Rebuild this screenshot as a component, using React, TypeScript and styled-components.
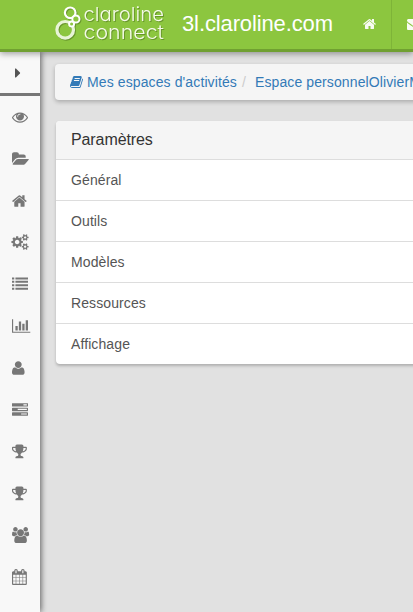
import React from "react";
import styled, { createGlobalStyle } from "styled-components";

const GlobalStyle = createGlobalStyle`
  * { box-sizing: border-box; }
  body {
    margin: 0;
    background: #e1e1e1;
    color: #555;
    font: 14px/20px "Liberation Sans", Arial, sans-serif;
    overflow: hidden;
  }
`;

const Page = styled.div`
  height: 612px;
  width: 100%;
  display: flex;
  flex-direction: column;
  overflow: hidden;
`;

const Header = styled.header`
  position: relative;
  z-index: 2;
  flex: none;
  height: 52px;
  display: flex;
  align-items: stretch;
  background: #8cc63f;
  border-bottom: 3px solid #70a031;
  box-shadow: 0 2px 6px rgba(0, 0, 0, 0.35);
  color: #fff;
`;

const Logo = styled.svg`
  flex: none;
  width: 112px;
  height: 49px;
  margin-left: 54px;
  filter: drop-shadow(1px 1px 0.5px rgba(60, 90, 20, 0.45));
`;

const LogoText = styled.text`
  font: 300 19px Inter, sans-serif;
  font-feature-settings: "cv11";
  fill: #f4fae8;
`;

const SiteName = styled.span`
  flex: none;
  width: 182px;
  padding-left: 16px;
  font-size: 22px;
  letter-spacing: -0.12px;
  line-height: 48px;
  white-space: nowrap;
`;

const NavItem = styled.a`
  flex: none;
  width: 44px;
  padding: 17px 0 0 15px;
  border-right: 1px solid #7eb338;
  opacity: 0.94;
`;

const Body = styled.div`
  flex: 1;
  display: flex;
  min-height: 0;
`;

const Sidebar = styled.nav`
  position: relative;
  z-index: 1;
  flex: none;
  width: 40px;
  display: flex;
  flex-direction: column;
  background: #f8f8f8;
  box-shadow: 1px 0 6px rgba(0, 0, 0, 0.6);
  color: #777;
`;

const Toggle = styled.div`
  flex: none;
  height: 44px;
  padding: 13px 0 0 15px;
  border-bottom: 3px solid #777;
  color: #555;
`;

const SideItem = styled.a`
  flex: none;
  height: 41.8px;
  padding: 13px 0 0 12px;
`;

const Glyph = styled.svg`
  display: block;
  flex: none;
  fill: currentColor;
  overflow: visible;
`;

const Content = styled.main`
  flex: none;
  width: 700px;
  padding: 12px 15px 0;
`;

const Breadcrumb = styled.div`
  height: 36px;
  display: flex;
  align-items: center;
  padding: 0 15px;
  border-radius: 4px;
  background: #f5f5f5;
  box-shadow: 0 2px 4px rgba(0, 0, 0, 0.24);
  letter-spacing: 0.11px;
  white-space: nowrap;
`;

const Crumb = styled.a`
  display: flex;
  align-items: center;
  gap: 4px;
  color: #337ab7;
`;

const Separator = styled.span`
  padding: 0 9px 0 5px;
  color: #ccc;
`;

const Panel = styled.section`
  margin: 21px 0 0 1px;
  border-radius: 4px;
  background: #fff;
  overflow: hidden;
  box-shadow: 0 2px 3px rgba(0, 0, 0, 0.22);
`;

const PanelTitle = styled.h3`
  height: 38px;
  margin: 0;
  padding: 0 15px;
  background: #f5f5f5;
  color: #333;
  font-size: 16px;
  font-weight: 400;
  letter-spacing: -0.1px;
  line-height: 37px;
`;

const PanelRow = styled.div`
  height: 41px;
  padding: 10px 15px;
  border-top: 1px solid #ddd;
  color: #555;
  letter-spacing: 0.1px;
`;

interface IconShape {
  w: number;
  d: string;
}

const icons: Record<string, IconShape> = {
  caret: { w: 640, d: "M576 896q0 26-19 45l-448 448q-19 19-45 19t-45-19-19-45v-896q0-26 19-45t45-19 45 19l448 448q19 19 19 45z" },
  eye: { w: 1792, d: "M1664 960q-152-236-381-353 61 104 61 225 0 185-131.5 316.5t-316.5 131.5-316.5-131.5-131.5-316.5q0-121 61-225-229 117-381 353 133 205 333.5 326.5t434.5 121.5 434.5-121.5 333.5-326.5zm-720-384q0-20-14-34t-34-14q-125 0-214.5 89.5t-89.5 214.5q0 20 14 34t34 14 34-14 14-34q0-86 61-147t147-61q20 0 34-14t14-34zm848 384q0 34-20 69-140 230-376.5 368.5t-499.5 138.5-499.5-139-376.5-368q-20-35-20-69t20-69q140-229 376.5-368t499.5-139 499.5 139 376.5 368q20 35 20 69z" },
  folder: { w: 1920, d: "M1879 952q0 31-31 66l-336 396q-43 51-120.5 86.5t-143.5 35.5h-1088q-34 0-60.5-13t-26.5-43q0-31 31-66l336-396q43-51 120.5-86.5t143.5-35.5h1088q34 0 60.5 13t26.5 43zm-343-344v160h-832q-94 0-197 47.5t-164 119.5l-337 396-5 6q0-4-.5-12.5t-.5-12.5v-960q0-92 66-158t158-66h320q92 0 158 66t66 158v32h544q92 0 158 66t66 158z" },
  home: { w: 1664, d: "M1408 992v480q0 26-19 45t-45 19h-384v-384h-256v384h-384q-26 0-45-19t-19-45v-480q0-1 .5-3t.5-3l575-474 575 474q1 2 1 6zm223-69l-62 74q-8 9-21 11h-3q-13 0-21-7l-692-577-692 577q-12 8-24 7-13-2-21-11l-62-74q-8-10-7-23.5t11-21.5l719-599q32-26 76-26t76 26l244 204v-195q0-14 9-23t23-9h192q14 0 23 9t9 23v408l219 182q10 8 11 21.5t-7 23.5z" },
  cogs: { w: 1920, d: "M832 896q0-106-75-181t-181-75-181 75-75 181 75 181 181 75 181-75 75-181zm768 512q0-52-38-90t-90-38-90 38-38 90q0 53 37.5 90.5t90.5 37.5 90.5-37.5 37.5-90.5zm0-1024q0-52-38-90t-90-38-90 38-38 90q0 53 37.5 90.5t90.5 37.5 90.5-37.5 37.5-90.5zm-384 421v185q0 10-7 19.5t-16 10.5l-155 24q-11 35-32 76 34 48 90 115 7 11 7 20 0 12-7 19-23 30-82.5 89.5t-78.5 59.5q-11 0-21-7l-115-90q-37 19-77 31-11 108-23 155-7 24-30 24h-186q-11 0-20-7.5t-10-17.5l-23-153q-34-10-75-31l-118 89q-7 7-20 7-11 0-21-8-144-133-144-160 0-9 7-19 10-14 41-53t47-61q-23-44-35-82l-152-24q-10-1-17-9.5t-7-19.5v-185q0-10 7-19.5t16-10.5l155-24q11-35 32-76-34-48-90-115-7-11-7-20 0-12 7-20 22-30 82-89t79-59q11 0 21 7l115 90q34-18 77-32 11-108 23-154 7-24 30-24h186q11 0 20 7.5t10 17.5l23 153q34 10 75 31l118-89q8-7 20-7 11 0 21 8 144 133 144 160 0 8-7 19-12 16-42 54t-45 60q23 48 34 82l152 23q10 2 17 10.5t7 19.5zm640 533v140q0 16-149 31-12 27-30 52 51 113 51 138 0 4-4 7-122 71-124 71-8 0-46-47t-52-68q-20 2-30 2t-30-2q-14 21-52 68t-46 47q-2 0-124-71-4-3-4-7 0-25 51-138-18-25-30-52-149-15-149-31v-140q0-16 149-31 13-29 30-52-51-113-51-138 0-4 4-7 4-2 35-20t59-34 30-16q8 0 46 46.5t52 67.5q20-2 30-2t30 2q51-71 92-112l6-2q4 0 124 70 4 3 4 7 0 25-51 138 17 23 30 52 149 15 149 31zm0-1024v140q0 16-149 31-12 27-30 52 51 113 51 138 0 4-4 7-122 71-124 71-8 0-46-47t-52-68q-20 2-30 2t-30-2q-14 21-52 68t-46 47q-2 0-124-71-4-3-4-7 0-25 51-138-18-25-30-52-149-15-149-31v-140q0-16 149-31 13-29 30-52-51-113-51-138 0-4 4-7 4-2 35-20t59-34 30-16q8 0 46 46.5t52 67.5q20-2 30-2t30 2q51-71 92-112l6-2q4 0 124 70 4 3 4 7 0 25-51 138 17 23 30 52 149 15 149 31z" },
  list: { w: 1792, d: "M0 1312h256v224h-256zM0 928h256v224h-256zM0 544h256v224h-256zM0 160h256v224h-256zM384 1312h1408v224h-1408zM384 928h1408v224h-1408zM384 544h1408v224h-1408zM384 160h1408v224h-1408z" },
  chart: { w: 2048, d: "M640 896v512h-256v-512h256zm384-512v1024h-256v-1024h256zm1024 1152v128h-2048v-1536h128v1408h1920zm-640-896v768h-256v-768h256zm384-384v1152h-256v-1152h256z" },
  user: { w: 1408, d: "M1408 1405q0 120-73 189.5t-194 69.5h-874q-121 0-194-69.5t-73-189.5q0-53 3.5-103.5t14-109 26.5-108.5 43-97.5 62-81 85.5-53.5 111.5-20q9 0 42 21.5t74.5 48 108 48 133.5 21.5 133.5-21.5 108-48 74.5-48 42-21.5q61 0 111.5 20t85.5 53.5 62 81 43 97.5 26.5 108.5 14 109 3.5 103.5zm-320-893q0 159-112.5 271.5t-271.5 112.5-271.5-112.5-112.5-271.5 112.5-271.5 271.5-112.5 271.5 112.5 112.5 271.5z" },
  tasks: { w: 1792, d: "M1024 1408h640v-128h-640v128zm-384-512h1024v-128h-1024v128zm640-512h384v-128h-384v128zm512 832v256q0 26-19 45t-45 19h-1664q-26 0-45-19t-19-45v-256q0-26 19-45t45-19h1664q26 0 45 19t19 45zm0-512v256q0 26-19 45t-45 19h-1664q-26 0-45-19t-19-45v-256q0-26 19-45t45-19h1664q26 0 45 19t19 45zm0-512v256q0 26-19 45t-45 19h-1664q-26 0-45-19t-19-45v-256q0-26 19-45t45-19h1664q26 0 45 19t19 45z" },
  trophy: { w: 1664, d: "M458 930q-74-162-74-370h-256v96q0 78 94.5 162t235.5 112zm1078-274v-96h-256q0 208-74 370 141-28 235.5-112t94.5-162zm128-128v128q0 71-41.5 143t-112 130-173 97.5-215.5 44.5q-42 54-95 95-38 34-52.5 72.5t-14.5 89.5q0 54 30.5 91t97.5 37q75 0 133.5 45.5t58.5 114.5v64q0 14-9 23t-23 9h-832q-14 0-23-9t-9-23v-64q0-69 58.5-114.5t133.5-45.5q67 0 97.5-37t30.5-91q0-51-14.5-89.5t-52.5-72.5q-53-41-95-95-113-5-215.5-44.5t-173-97.5-112-130-41.5-143v-128q0-40 28-68t68-28h288v-96q0-66 47-113t113-47h576q66 0 113 47t47 113v96h288q40 0 68 28t28 68z" },
  users: { w: 1920, d: "M593 896q-162 5-265 128h-134q-82 0-138-40.5t-56-118.5q0-353 124-353 6 0 43.5 21t97.5 42.5 119 21.5q67 0 133-23-5 37-5 66 0 159 81 256zm1071 637q0 120-73 189.5t-194 69.5h-874q-121 0-194-69.5t-73-189.5q0-53 3.5-103.5t14-109 26.5-108.5 43-97.5 62-81 85.5-53.5 111.5-20q10 0 43 21.5t73 48 107 48 135 21.5 135-21.5 107-48 73-48 43-21.5q61 0 111.5 20t85.5 53.5 62 81 43 97.5 26.5 108.5 14 109 3.5 103.5zm-1024-1277q0 106-75 181t-181 75-181-75-75-181 75-181 181-75 181 75 75 181zm704 384q0 159-112.5 271.5t-271.5 112.5-271.5-112.5-112.5-271.5 112.5-271.5 271.5-112.5 271.5 112.5 112.5 271.5zm576 225q0 78-56 118.5t-138 40.5h-134q-103-123-265-128 81-97 81-256 0-29-5-66 66 23 133 23 59 0 119-21.5t97.5-42.5 43.5-21q124 0 124 353zm-128-609q0 106-75 181t-181 75-181-75-75-181 75-181 181-75 181 75 75 181z" },
  calendar: { w: 1664, d: "M128 1664h288v-288h-288v288zm352 0h320v-288h-320v288zm-352-352h288v-320h-288v320zm352 0h320v-320h-320v320zm-352-384h288v-288h-288v288zm736 736h320v-288h-320v288zm-384-736h320v-288h-320v288zm768 736h288v-288h-288v288zm-384-352h320v-320h-320v320zm-352-864v-288q0-13-9.5-22.5t-22.5-9.5h-64q-13 0-22.5 9.5t-9.5 22.5v288q0 13 9.5 22.5t22.5 9.5h64q13 0 22.5-9.5t9.5-22.5zm736 864h288v-320h-288v320zm-384-384h320v-288h-320v288zm384 0h288v-288h-288v288zm32-480v-288q0-13-9.5-22.5t-22.5-9.5h-64q-13 0-22.5 9.5t-9.5 22.5v288q0 13 9.5 22.5t22.5 9.5h64q13 0 22.5-9.5t9.5-22.5zm384-64v1280q0 52-38 90t-90 38h-1408q-52 0-90-38t-38-90v-1280q0-52 38-90t90-38h128v-96q0-66 47-113t113-47h64q66 0 113 47t47 113v96h384v-96q0-66 47-113t113-47h64q66 0 113 47t47 113v96h128q52 0 90 38t38 90z" },
  book: { w: 1664, d: "M1639 478q40 57 18 129l-275 906q-19 64-76.5 107.5t-122.5 43.5h-923q-77 0-148.5-53.5t-99.5-131.5q-24-67-2-127 0-4 3-27t4-37q1-8-3-21.5t-3-19.5q2-11 8-21t16.5-23.5 16.5-23.5q23-38 45-91.5t30-91.5q3-10 .5-30t-.5-28q3-11 17-28t17-23q21-36 42-92t25-90q1-9-2.5-32t.5-28q4-13 22-30.5t22-22.5q19-26 42.5-84.5t27.5-96.5q1-8-3-25.5t-2-26.5q2-8 9-18t18-23 17-21q8-12 16.5-30.5t15-35 16-36 19.5-32 26.5-23.5 36-11.5 47.5 5.5l-1 3q38-9 51-9h761q74 0 114 56t18 130l-274 906q-36 119-71.5 153.5t-128.5 34.5h-869q-27 0-38 15-11 16-1 43 24 70 144 70h923q29 0 56-15.5t35-41.5l300-987q7-22 5-57 38 15 59 43zm-1064 2q-4 13 2 22.5t20 9.5h608q13 0 25.5-9.5t16.5-22.5l21-64q4-13-2-22.5t-20-9.5h-608q-13 0-25.5 9.5t-16.5 22.5zm-83 256q-4 13 2 22.5t20 9.5h608q13 0 25.5-9.5t16.5-22.5l21-64q4-13-2-22.5t-20-9.5h-608q-13 0-25.5 9.5t-16.5 22.5z" },
  envelope: { w: 1792, d: "M1792 710v794q0 66-47 113t-113 47h-1472q-66 0-113-47t-47-113v-794q44 49 101 87 362 246 497 345 57 42 92.5 65.5t94.5 48 110 24.5h2q51 0 110-24.5t94.5-48 92.5-65.5q170-123 498-345 57-39 100-87zm0-294q0 79-49 151t-122 123q-376 261-468 325-10 7-42.5 30.5t-54 38-52 32.5-57.5 27-50 9h-2q-23 0-50-9t-57.5-27-52-32.5-54-38-42.5-30.5q-91-64-262-182.5t-205-142.5q-62-42-117-115.5t-55-136.5q0-78 41.5-130t118.5-52h1472q65 0 112.5 47t47.5 113z" },
};

function Icon({ name, size = 16 }: { name: string; size?: number }) {
  const { w, d } = icons[name];
  return (
    <Glyph width={(w / 1792) * size} height={size} viewBox={`0 0 ${w} 1792`} aria-hidden>
      <path d={d} />
    </Glyph>
  );
}

const tools = ["eye", "folder", "home", "cogs", "list", "chart", "user", "tasks", "trophy", "trophy", "users", "calendar"];
const sections = ["Général", "Outils", "Modèles", "Ressources", "Affichage"];

export default function App() {
  return (
    <>
      <GlobalStyle />
      <Page>
        <Header>
          <Logo viewBox="0 0 112 49">
            <g fill="none" stroke="#fff">
              <circle cx="11.2" cy="29.8" r="8.3" stroke="#e8f4d6" strokeWidth="3.2" />
              <circle cx="16.2" cy="12.8" r="5.3" strokeWidth="2.2" />
              <circle cx="21.9" cy="19" r="3.6" fill="#8cc63f" strokeWidth="2" />
              <circle cx="17.6" cy="24" r="2.5" fill="#8cc63f" strokeWidth="1.9" />
            </g>
            <LogoText x="29.5" y="20.6" textLength="80.5" lengthAdjust="spacingAndGlyphs">claroline</LogoText>
            <LogoText x="29.5" y="39.2" textLength="80.5" lengthAdjust="spacingAndGlyphs">connect</LogoText>
          </Logo>
          <SiteName>3l.claroline.com</SiteName>
          <NavItem><Icon name="home" size={14} /></NavItem>
          <NavItem><Icon name="envelope" size={14} /></NavItem>
        </Header>
        <Body>
          <Sidebar>
            <Toggle><Icon name="caret" /></Toggle>
            {tools.map((name, i) => (
              <SideItem key={i}><Icon name={name} /></SideItem>
            ))}
          </Sidebar>
          <Content>
            <Breadcrumb>
              <Crumb><Icon name="book" size={14} />Mes espaces d'activités</Crumb>
              <Separator>/</Separator>
              <Crumb>Espace personnelOlivierM</Crumb>
            </Breadcrumb>
            <Panel>
              <PanelTitle>Paramètres</PanelTitle>
              {sections.map((label) => (
                <PanelRow key={label}>{label}</PanelRow>
              ))}
            </Panel>
          </Content>
        </Body>
      </Page>
    </>
  );
}
